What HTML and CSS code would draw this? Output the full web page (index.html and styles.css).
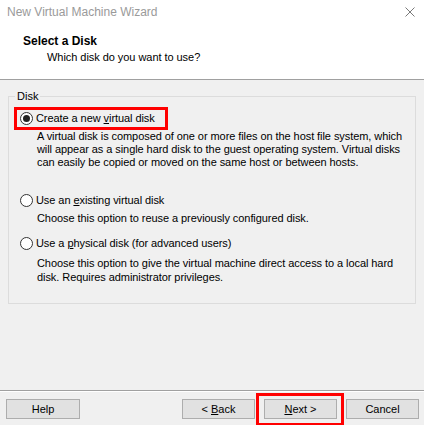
FILE: index.html
```html
<!DOCTYPE html>
<html lang="en">
<head>
<meta charset="utf-8">
<title>New Virtual Machine Wizard</title>
<link rel="stylesheet" href="styles.css">
</head>
<body>
<div class="window">
  <header class="header">
    <div class="titlebar">
      <span class="title">New Virtual Machine Wizard</span>
      <svg class="close" viewBox="0 0 10 10" width="10" height="10" aria-hidden="true">
        <path d="M0.5 0.5 L9.5 9.5 M9.5 0.5 L0.5 9.5" stroke="#7a7a7a" stroke-width="1" fill="none"/>
      </svg>
    </div>
    <div class="heading">Select a Disk</div>
    <div class="subheading">Which disk do you want to use?</div>
  </header>
  <main class="main">
    <fieldset class="group">
      <legend>Disk</legend>
      <div class="options">
        <div class="option selected">
          <span class="radio checked"></span>
          <span>Create a new <u>v</u>irtual disk</span>
        </div>
        <div class="desc desc1">A virtual disk is composed of one or more files on the host file system, which<br>will appear as a single hard disk to the guest operating system. Virtual disks<br>can easily be copied or moved on the same host or between hosts.</div>
        <div class="option opt2">
          <span class="radio"></span>
          <span>Use an <u>e</u>xisting virtual disk</span>
        </div>
        <div class="desc desc2">Choose this option to reuse a previously configured disk.</div>
        <div class="option opt3">
          <span class="radio"></span>
          <span>Use a <u>p</u>hysical disk (for advanced users)</span>
        </div>
        <div class="desc desc3">Choose this option to give the virtual machine direct access to a local hard<br>disk. Requires administrator privileges.</div>
      </div>
    </fieldset>
  </main>
  <footer class="footer">
    <button class="btn" type="button">Help</button>
    <div class="spacer"></div>
    <div class="nav">
      <button class="btn nav-btn" type="button">&lt; <u>B</u>ack</button>
      <button class="btn nav-btn next" type="button"><u>N</u>ext &gt;</button>
      <button class="btn nav-btn" type="button">Cancel</button>
    </div>
  </footer>
</div>
</body>
</html>
```
FILE: styles.css
```css
* { box-sizing: border-box; }
html, body { margin: 0; padding: 0; }
body {
  width: 424px;
  height: 425px;
  overflow: hidden;
  background: #f0f0f0;
  font-family: "Liberation Sans", Arial, sans-serif;
  font-size: 11px;
  color: #000;
}
.window {
  display: flex;
  flex-direction: column;
  height: 425px;
}
.header {
  flex: none;
  height: 80px;
  background: #fff;
  border-bottom: 1px solid #a0a0a0;
}
.titlebar {
  height: 24px;
  display: flex;
  align-items: center;
  justify-content: space-between;
  padding: 0 9px 0 7px;
}
.title {
  font-size: 12px;
  color: #9a9a9a;
  line-height: 24px;
}
.close { display: block; }
.heading {
  margin: 10px 0 0 23px;
  font-size: 12px;
  font-weight: bold;
  line-height: 15px;
}
.subheading {
  margin: 1px 0 0 47px;
  line-height: 14px;
  letter-spacing: -0.05px;
}
.main {
  flex: 1;
  padding: 9px 8px 0 8px;
}
.group {
  margin: 0;
  padding: 0;
  min-width: 0;
  height: 215px;
  border: 1px solid #dcdcdc;
}
.group legend {
  margin-left: 6px;
  padding: 0 2px;
  line-height: 14px;
}
.options {
  padding: 7px 0 0 11px;
}
.option {
  display: flex;
  align-items: center;
  gap: 3px;
  height: 16px;
  line-height: 16px;
  white-space: nowrap;
  letter-spacing: -0.07px;
}
.option.selected {
  position: relative;
  width: fit-content;
  padding-right: 10px;
}
.option.selected::after {
  content: "";
  position: absolute;
  top: -3px;
  bottom: -4px;
  left: -6px;
  right: -3px;
  border: 3px solid #f00;
}
.radio {
  flex: none;
  width: 13px;
  height: 13px;
  border: 1px solid #333;
  border-radius: 50%;
  background: #fff;
  display: flex;
  align-items: center;
  justify-content: center;
}
.radio.checked::before {
  content: "";
  width: 7px;
  height: 7px;
  border-radius: 50%;
  background: #222;
}
.desc {
  margin-left: 17px;
  line-height: 13px;
  white-space: nowrap;
  letter-spacing: -0.07px;
}
.desc1 { margin-top: 4px; }
.opt2 { margin-top: 23px; }
.desc2 { margin-top: 4px; }
.opt3 { margin-top: 10px; }
.desc3 { margin-top: 5px; line-height: 14px; }
.footer {
  flex: none;
  height: 35px;
  border-top: 1px solid #a0a0a0;
  box-shadow: inset 0 1px 0 #fff;
  display: flex;
  align-items: flex-start;
  padding: 8px 5px 0 6px;
}
.spacer { flex: 1; }
.nav {
  display: flex;
  gap: 9px;
}
.btn {
  width: 74px;
  height: 20px;
  margin: 0;
  padding: 0;
  border: 1px solid #adadad;
  background: #e1e1e1;
  font-family: inherit;
  font-size: 11px;
  color: #000;
  line-height: 18px;
  text-align: center;
}
.nav-btn { width: 73px; }
.next { position: relative; }
.next::after {
  content: "";
  position: absolute;
  top: -7px;
  bottom: -8px;
  left: -9px;
  right: -8px;
  border: 3px solid #f00;
}
```
